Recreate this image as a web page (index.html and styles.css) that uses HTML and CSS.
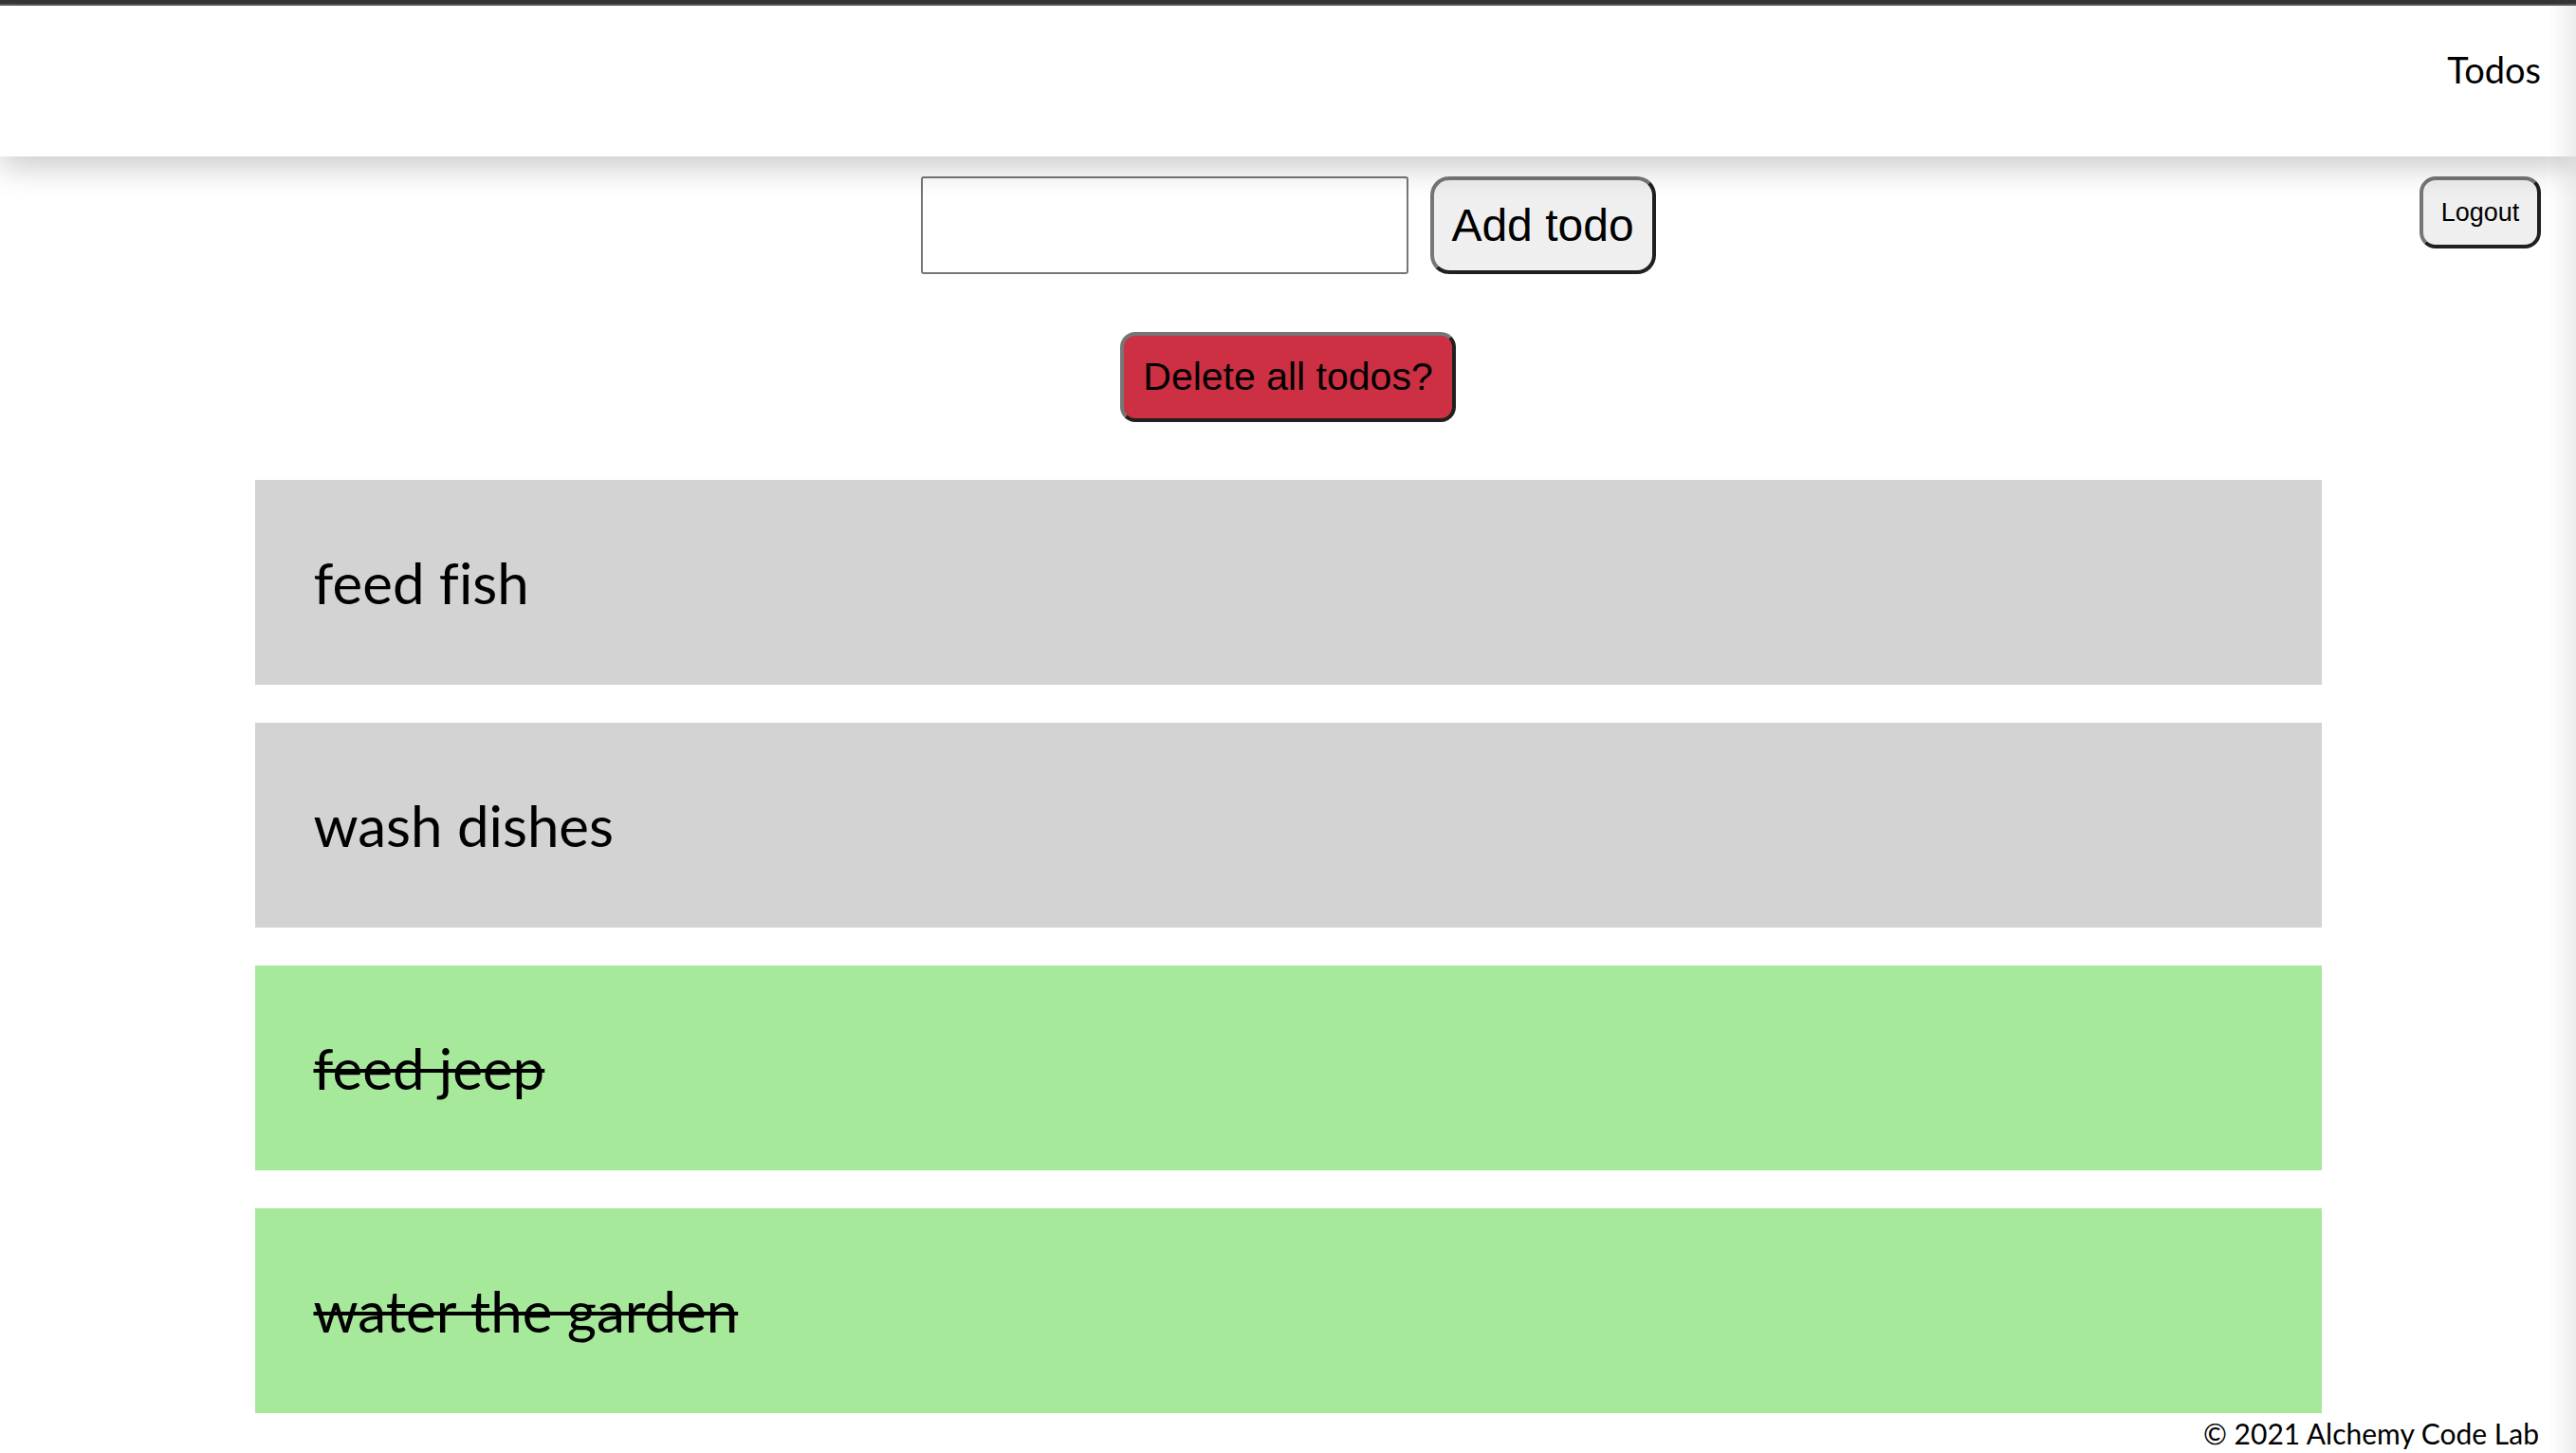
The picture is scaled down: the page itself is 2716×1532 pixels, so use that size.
FILE: index.html
```html
<!DOCTYPE html>
<html lang="en">
<head>
<meta charset="utf-8">
<title>Todos</title>
<link rel="stylesheet" href="styles.css">
</head>
<body>
<div class="topbar"></div>
<header class="header">
  <span class="brand">Todos</span>
</header>
<main class="main">
  <div class="controls">
    <form class="add-form">
      <input class="todo-input" type="text">
      <button class="btn btn-add" type="button">Add todo</button>
    </form>
    <button class="btn btn-logout" type="button">Logout</button>
  </div>
  <div class="delete-row">
    <button class="btn btn-delete" type="button">Delete all todos?</button>
  </div>
  <ul class="todo-list">
    <li class="todo"><p class="todo-text">feed fish</p></li>
    <li class="todo"><p class="todo-text">wash dishes</p></li>
    <li class="todo done"><p class="todo-text">feed jeep</p></li>
    <li class="todo done"><p class="todo-text">water the garden</p></li>
  </ul>
</main>
<footer class="footer">© 2021 Alchemy Code Lab</footer>
<div class="edge-shade"></div>
</body>
</html>
```
FILE: styles.css
```css
html, body {
  margin: 0;
  padding: 0;
  background: #ffffff;
}
body {
  font-family: "Lato", "Open Sans", sans-serif;
  font-variant-ligatures: none;
  color: #000;
  width: 2716px;
  height: 1532px;
  position: relative;
  overflow: hidden;
}
.topbar {
  height: 4px;
  background: #36363a;
  border-bottom: 2px solid #5c5c5e;
}
.header {
  height: 159px;
  background: #fff;
  display: flex;
  justify-content: flex-end;
  align-items: flex-start;
  padding: 0 37px 0 0;
  box-shadow: 0 10px 32px rgba(0, 0, 0, 0.22);
  position: relative;
  z-index: 1;
}
.brand {
  font-size: 38px;
  line-height: 1;
  margin-top: 48px;
}
.main {
  padding-top: 21px;
}
.controls {
  display: grid;
  grid-template-columns: 1fr auto 1fr;
  align-items: start;
  padding-right: 37px;
  padding-left: 37px;
}
.add-form {
  grid-column: 2;
  display: flex;
  gap: 23px;
  margin: 0;
}
.todo-input {
  width: 514px;
  height: 103px;
  box-sizing: border-box;
  border: 2px solid #767676;
  border-radius: 3px;
  padding: 0 10px;
  font-size: 40px;
  background: #fff;
}
.btn {
  font-family: "Liberation Sans", Arial, sans-serif;
  background: #efefef;
  color: #000;
  border: 4px solid;
  border-color: #767676 #202020 #202020 #767676;
  box-sizing: border-box;
  cursor: pointer;
}
.btn-add {
  width: 238px;
  height: 103px;
  font-size: 48px;
  border-radius: 20px;
  padding: 0;
}
.btn-logout {
  grid-column: 3;
  justify-self: end;
  width: 128px;
  height: 76px;
  font-size: 27px;
  border-radius: 17px;
  padding: 0;
}
.delete-row {
  display: flex;
  justify-content: center;
  margin-top: 61px;
}
.btn-delete {
  width: 354px;
  height: 95px;
  font-size: 41px;
  border-radius: 16px;
  background: #cc3042;
  padding: 0;
}
.todo-list {
  list-style: none;
  margin: 61px auto 0;
  padding: 0;
  width: 2179px;
  display: flex;
  flex-direction: column;
  gap: 40px;
}
.todo {
  height: 216px;
  background: #d3d3d3;
  display: flex;
  align-items: center;
  padding: 0 62px;
  box-sizing: border-box;
}
.todo.done {
  background: #a7e99b;
}
.todo-text {
  margin: 0;
  font-size: 60px;
  line-height: 1;
}
.done .todo-text {
  text-decoration: line-through;
  text-decoration-thickness: 4px;
}
.footer {
  text-align: right;
  padding-right: 39px;
  font-size: 30px;
  line-height: 1;
  margin-top: 6px;
}
.edge-shade {
  position: fixed;
  top: 6px;
  right: 0;
  width: 28px;
  height: 100%;
  background: linear-gradient(to right, rgba(0, 0, 0, 0), rgba(0, 0, 0, 0.07));
  pointer-events: none;
  z-index: 2;
}
```
